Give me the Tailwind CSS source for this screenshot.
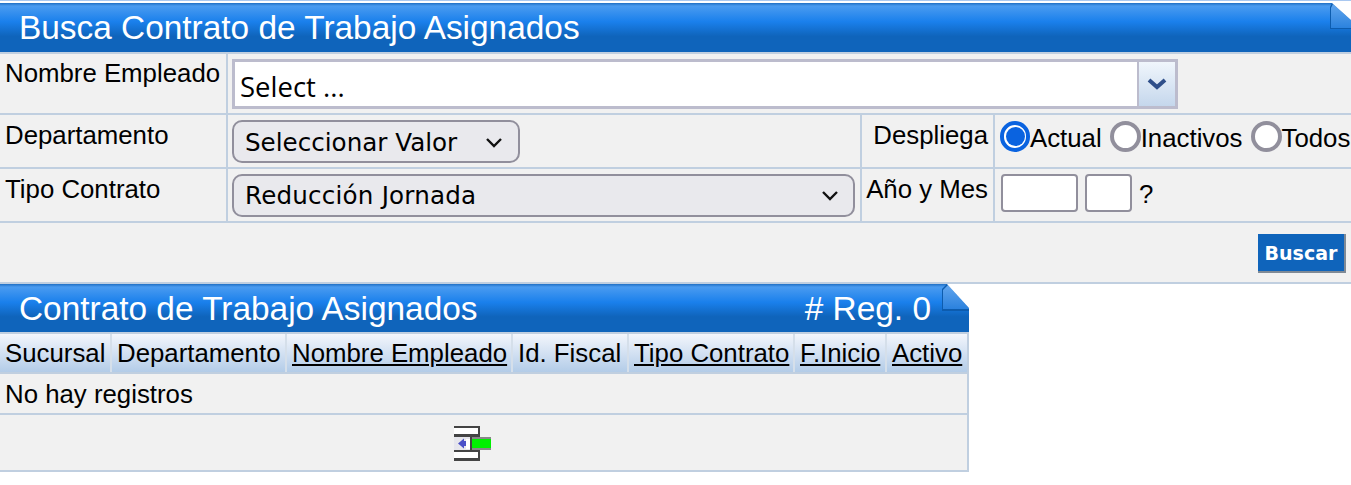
<!DOCTYPE html>
<html lang="es">
<head>
    <meta charset="utf-8"/>
    <title>Busca Contrato de Trabajo Asignados</title>
    <script src="https://cdn.jsdelivr.net/npm/@tailwindcss/browser@4"></script>
</head>
<body class="bg-white font-['Liberation_Sans',Arial,sans-serif] text-[25.8px] leading-[28px] text-black overflow-hidden">
    <div class="h-[1px] bg-[#a9c8f0]"></div>
    <div class="h-[2px] bg-white"></div>

    <!-- search panel -->
    <section class="w-full">
        <header class="relative h-[49px] pl-[19px] pt-[8px] text-[33.4px] leading-[34px] text-white bg-[linear-gradient(#1f6fc4_0,#4a9bf0_3px,#1a80ec_38%,#0f64bb_68%,#0f64bb_100%)]">
            Busca Contrato de Trabajo Asignados
            <svg class="absolute right-0 top-0" width="21" height="28" viewBox="0 0 21 28">
                <defs>
                    <linearGradient id="fold1" x1="0" y1="0" x2="0" y2="1">
                        <stop offset="0" stop-color="#62a6ee"/>
                        <stop offset="1" stop-color="#2b82de"/>
                    </linearGradient>
                </defs>
                <polygon points="0,4 0,26 21,26 21,17 2,0" fill="#0d5cae"/>
                <polygon points="1,5 1,25 21,25 21,17 3,1" fill="url(#fold1)"/>
                <polygon points="2,0 21,0 21,17" fill="#fff"/>
            </svg>
        </header>
        <div class="grid grid-cols-[228px_634px_133px_1fr] bg-[#f1f1f1] border-y-2 border-[#c0cfe0]">
            <div class="h-[59px] pl-[5px] pt-[5px] border-r-2 border-[#c0cfe0] whitespace-nowrap">Nombre Empleado</div>
            <div class="col-span-3 h-[59px] pl-[4px] pt-[5px]">
                <div class="flex w-[946px] h-[50px] border-[3px] border-[#bcbccd] bg-white">
                    <div class="flex-1 pl-[5px] pt-[11px] font-['Open_Sans',sans-serif] text-[27.5px]">Select ...</div>
                    <div class="flex w-[38px] items-center justify-center border-l-[2px] border-[#bcbccd] bg-gradient-to-b from-[#f0f6fc] to-[#c5d7ec]">
                        <svg width="22" height="14" viewBox="0 0 22 14"><path d="M3 3 L11 10 L19 3" fill="none" stroke="#2f4f8a" stroke-width="4"/></svg>
                    </div>
                </div>
            </div>

            <div class="h-[54px] pl-[5px] pt-[6px] border-r-2 border-t-2 border-[#c0cfe0]">Departamento</div>
            <div class="h-[54px] pl-[4px] pt-[5px] border-r-2 border-t-2 border-[#c0cfe0]">
                <div class="flex w-[288px] h-[43px] items-center justify-between rounded-[10px] border-2 border-[#918f9c] bg-[#e9e9ed] pl-[11px] pr-[14px] pt-[2px] font-['DejaVu_Sans',sans-serif] text-[24.6px]">
                    Seleccionar Valor
                    <svg width="20" height="12" viewBox="0 0 20 12"><path d="M3 2 L10 9 L17 2" fill="none" stroke="#111" stroke-width="2.4"/></svg>
                </div>
            </div>
            <div class="h-[54px] pr-[5px] pt-[6px] text-right border-r-2 border-t-2 border-[#c0cfe0]">Despliega</div>
            <div class="flex h-[54px] items-start pl-[5px] pt-[6px] border-t-2 border-[#c0cfe0] whitespace-nowrap">
                <span class="flex items-center">
                    <span class="flex h-[31px] w-[30px] items-center justify-center rounded-full border-[4px] border-[#0a63e0] bg-white"><span class="h-[19px] w-[19px] rounded-full bg-[#0a63e0]"></span></span>
                    <span class="pt-[2px]">Actual</span>
                </span>
                <span class="ml-[8px] flex items-center">
                    <span class="h-[31px] w-[31px] rounded-full border-[4px] border-[#918f9c] bg-white"></span>
                    <span class="pt-[2px]">Inactivos</span>
                </span>
                <span class="ml-[8px] flex items-center">
                    <span class="h-[31px] w-[31px] rounded-full border-[4px] border-[#918f9c] bg-white"></span>
                    <span class="pt-[2px]">Todos</span>
                </span>
            </div>

            <div class="h-[54px] pl-[5px] pt-[6px] border-r-2 border-t-2 border-[#c0cfe0]">Tipo Contrato</div>
            <div class="h-[54px] pl-[4px] pt-[5px] border-r-2 border-t-2 border-[#c0cfe0]">
                <div class="flex w-[623px] h-[43px] items-center justify-between rounded-[10px] border-2 border-[#918f9c] bg-[#e9e9ed] pl-[11px] pr-[13px] pt-[1px] font-['DejaVu_Sans',sans-serif] text-[24.6px] tracking-[0.2px]">
                    Reducción Jornada
                    <svg width="20" height="12" viewBox="0 0 20 12"><path d="M3 2 L10 9 L17 2" fill="none" stroke="#111" stroke-width="2.4"/></svg>
                </div>
            </div>
            <div class="h-[54px] pr-[5px] pt-[6px] text-right border-r-2 border-t-2 border-[#c0cfe0] whitespace-nowrap">Año y Mes</div>
            <div class="flex h-[54px] items-start gap-[7px] pl-[6px] pt-[5px] border-t-2 border-[#c0cfe0]">
                <span class="h-[38px] w-[77px] rounded-[4px] border-2 border-[#918f9c] bg-white"></span>
                <span class="h-[38px] w-[47px] rounded-[4px] border-2 border-[#918f9c] bg-white"></span>
                <span class="pt-[6px]">?</span>
            </div>

            <div class="col-span-4 flex h-[61px] items-start justify-end pr-[5px] pt-[11px] border-t-2 border-[#c0cfe0]">
                <span class="flex h-[39px] w-[88px] items-center justify-center border-r-2 border-b-2 border-[#7f8a96] bg-[#0f64bb] font-['DejaVu_Sans',sans-serif] text-[19px] font-bold text-white">Buscar</span>
            </div>
        </div>
    </section>

    <!-- results panel -->
    <section class="w-[969px]">
        <header class="relative flex h-[48px] justify-between pl-[19px] pr-[38px] pt-[8px] text-[33.4px] leading-[34px] text-white bg-[linear-gradient(#1f6fc4_0,#4a9bf0_3px,#1a80ec_38%,#0f64bb_68%,#0f64bb_100%)]">
            <span>Contrato de Trabajo Asignados</span>
            <span># Reg. 0</span>
            <svg class="absolute right-0 top-0" width="27" height="28" viewBox="0 0 27 28">
                <defs>
                    <linearGradient id="fold2" x1="0" y1="0" x2="0" y2="1">
                        <stop offset="0" stop-color="#62a6ee"/>
                        <stop offset="1" stop-color="#2b82de"/>
                    </linearGradient>
                </defs>
                <polygon points="0,5 0,27 27,27 27,24 5,0" fill="#0d5cae"/>
                <polygon points="1,6 1,25 27,25 27,24 6,1" fill="url(#fold2)"/>
                <polygon points="5,0 27,0 27,24" fill="#fff"/>
            </svg>
        </header>
        <div class="-ml-[2px] border-x-2 border-b-2 border-[#c0cfe0] bg-[#f1f1f1]">
            <div class="flex h-[42px] border-y-2 border-[#c0cfe0] leading-[38px] whitespace-nowrap">
                <div class="w-[112px] border-r-2 border-[#d5dfea] pl-[5px] bg-gradient-to-b from-[#f3f6fc] to-[#b3cce8]">Sucursal</div>
                <div class="w-[175px] border-r-2 border-[#d5dfea] pl-[5px] bg-gradient-to-b from-[#f3f6fc] to-[#b3cce8]">Departamento</div>
                <div class="w-[226px] border-r-2 border-[#d5dfea] pl-[5px] bg-gradient-to-b from-[#f3f6fc] to-[#b3cce8] underline">Nombre Empleado</div>
                <div class="w-[116px] border-r-2 border-[#d5dfea] pl-[5px] bg-gradient-to-b from-[#f3f6fc] to-[#b3cce8]">Id. Fiscal</div>
                <div class="w-[166px] border-r-2 border-[#d5dfea] pl-[5px] bg-gradient-to-b from-[#f3f6fc] to-[#b3cce8] underline">Tipo Contrato</div>
                <div class="w-[92px] border-r-2 border-[#d5dfea] pl-[5px] bg-gradient-to-b from-[#f3f6fc] to-[#b3cce8] underline">F.Inicio</div>
                <div class="flex-1 pl-[5px] bg-gradient-to-b from-[#f3f6fc] to-[#b3cce8] underline">Activo</div>
            </div>
            <div class="h-[39px] pl-[5px] pt-[6px]">No hay registros</div>
            <div class="flex h-[57px] items-start justify-center border-t-2 border-[#c0cfe0] pr-[22px] pt-[11px]">
                <svg width="37" height="35" viewBox="0 0 37 35">
                    <rect x="0" y="0" width="26" height="11" fill="#444"/>
                    <rect x="0" y="2" width="24" height="6" fill="#fff"/>
                    <rect x="0" y="24" width="26" height="11" fill="#444"/>
                    <rect x="0" y="26" width="24" height="6" fill="#fff"/>
                    <rect x="0" y="11" width="18" height="13" fill="#e6e6ec"/>
                    <path d="M4 17.5 L10 12.5 V22.5 Z" fill="#4a50c8"/>
                    <rect x="10" y="15" width="2" height="5" fill="#4a50c8"/>
                    <rect x="12" y="13" width="4" height="10" fill="#fff"/>
                    <rect x="16" y="11" width="2" height="13" fill="#444"/>
                    <rect x="18" y="11" width="19" height="13" fill="#888"/>
                    <rect x="18" y="13" width="19" height="9" fill="#00f000"/>
                </svg>
            </div>
        </div>
    </section>
</body>
</html>
